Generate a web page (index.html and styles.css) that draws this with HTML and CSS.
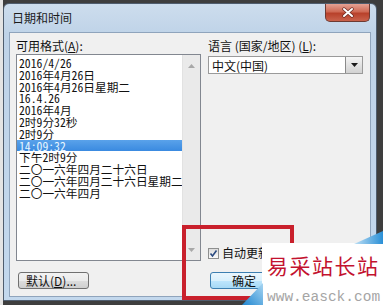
FILE: index.html
```html
<!DOCTYPE html>
<html lang="zh-CN">
<head>
    <meta charset="UTF-8">
    <meta name="viewport" content="width=device-width, initial-scale=1.0">
    <title>日期和时间</title>
    <link rel="stylesheet" href="styles.css">
</head>
<body>

<div class="desk">
    <div class="dialog">
        <div class="titlebar">
            <span class="title">日期和时间</span>
            <span class="close">
                <svg width="14" height="11" viewBox="0 0 14 11">
                    <path d="M3 2 L11 9 M11 2 L3 9" stroke="#6b2a22" stroke-width="3.4" stroke-linecap="round"/>
                    <path d="M3 2 L11 9 M11 2 L3 9" stroke="#ffffff" stroke-width="2" stroke-linecap="round"/>
                </svg>
            </span>
        </div>

        <div class="client">
            <div class="col col-left">
                <div class="label">可用格式(<u>A</u>):</div>
                <div class="listbox">
                    <ul class="items">
                        <li>2016/4/26</li>
                        <li>2016年4月26日</li>
                        <li>2016年4月26日星期二</li>
                        <li>16.4.26</li>
                        <li>2016年4月</li>
                        <li>2时9分32秒</li>
                        <li>2时9分</li>
                        <li class="selected">14:09:32</li>
                        <li>下午2时9分</li>
                        <li>二〇一六年四月二十六日</li>
                        <li>二〇一六年四月二十六日星期二</li>
                        <li>二〇一六年四月</li>
                    </ul>
                    <div class="scrollbar">
                        <svg class="arrow" width="7" height="4" viewBox="0 0 7 4"><path d="M0 4 L3.5 0 L7 4 Z" fill="#a8a8a8"/></svg>
                        <svg class="arrow" width="7" height="4" viewBox="0 0 7 4"><path d="M0 0 L3.5 4 L7 0 Z" fill="#a8a8a8"/></svg>
                    </div>
                </div>
                <button class="btn">默认(<u>D</u>)...</button>
            </div>

            <div class="col col-right">
                <div class="label">语言 (国家/地区) (<u>L</u>):</div>
                <div class="combo">
                    <span class="combo-text">中文(中国)</span>
                    <span class="drop">
                        <svg width="7" height="4" viewBox="0 0 7 4"><path d="M0 0 L7 0 L3.5 4 Z" fill="#1a1a1a"/></svg>
                    </span>
                </div>
                <div class="check">
                    <span class="box">
                        <svg width="9" height="9" viewBox="0 0 9 9"><path d="M1.5 4.5 L3.5 7 L7.5 1.5" stroke="#2a4a80" stroke-width="1.6" fill="none"/></svg>
                    </span>
                    <span>自动更新</span>
                </div>
                <button class="btn btn-default">确定</button>
            </div>
        </div>
    </div>

    <div class="mark-box"></div>

    <div class="watermark">
        <svg class="wm-bg" width="141" height="74" viewBox="0 0 141 74">
            <defs>
                <linearGradient id="blueA" x1="0" y1="0" x2="1" y2="0">
                    <stop offset="0" stop-color="#bfe0f5"/>
                    <stop offset="1" stop-color="#2a8fd6"/>
                </linearGradient>
                <linearGradient id="blueB" x1="0" y1="1" x2="1" y2="0">
                    <stop offset="0" stop-color="#1f86d0"/>
                    <stop offset="1" stop-color="#a9d6f2"/>
                </linearGradient>
            </defs>
            <rect x="20" y="12" width="121" height="62" fill="#ffffff"/>
            <path d="M112 13 L141 0 L141 13 Z" fill="url(#blueA)"/>
            <path d="M0 74 L21 52 L21 74 Z" fill="url(#blueB)"/>
        </svg>
        <div class="wm-title">易采站长站</div>
        <div class="wm-url">www.easck.com</div>
    </div>
</div>

</body>
</html>
```

FILE: styles.css
```css
body {
    margin: 0;
    background-color: #3e3e3e;
    font-family: "Noto Sans CJK SC", "Noto Sans", sans-serif;
    font-size: 12px;
    color: #111;
}
.desk {
    position: relative;
    width: 383px;
    height: 305px;
    overflow: hidden;
    padding: 3px 0 0 3px;
    box-sizing: border-box;
    background: linear-gradient(to right, #e4e4e4 3px, #3e3e3e 3px);
}
.dialog {
    width: 374px;
    height: 298px;
    border: 1px solid #4f5d6e;
    border-radius: 6px 6px 0 0;
    background: linear-gradient(#cddded, #bfd3e8 30px, #c3d8ed);
    box-sizing: border-box;
}
.titlebar {
    height: 28px;
    display: flex;
    align-items: flex-start;
    justify-content: space-between;
    padding: 0 6px 0 8px;
}
.title {
    margin-top: 7px;
    font-size: 12px;
    line-height: 14px;
    color: #1b1b1b;
}
.close {
    width: 45px;
    height: 18px;
    border: 1px solid #6d3a33;
    border-top: none;
    border-radius: 0 0 5px 5px;
    background: linear-gradient(#e4a294, #cf6a55 45%, #b8412b 55%, #c9624c);
    box-sizing: border-box;
    display: flex;
    align-items: center;
    justify-content: center;
}
.client {
    margin-left: 5px;
    width: 362px;
    height: 265px;
    border: 1px solid #8fa4bc;
    background-color: #f0f0f0;
    box-sizing: border-box;
    display: flex;
    gap: 7px;
    padding: 6px 7px 7px 6px;
}
.col {
    display: flex;
    flex-direction: column;
}
.col-left {
    width: 185px;
}
.col-right {
    width: 155px;
}
.label {
    height: 13px;
    line-height: 13px;
    white-space: nowrap;
}
.label u, .btn u {
    text-decoration: underline;
}
.listbox {
    margin-top: 2px;
    height: 207px;
    border: 1px solid #828790;
    background-color: #fff;
    box-sizing: border-box;
    display: flex;
}
.items {
    list-style: none;
    margin: 0;
    padding: 2px 0 0 0;
    flex: 1;
    overflow: hidden;
}
.items li {
    height: 11.8px;
    line-height: 11.8px;
    padding-left: 2px;
    white-space: nowrap;
    font-family: "Noto Sans Mono CJK SC", "Noto Sans CJK SC", monospace;
    font-size: 11.7px;
}
.items li.selected {
    background: linear-gradient(#5aa2ea, #3a8ae0);
    color: #e6f6ff;
}
.scrollbar {
    width: 17px;
    background-color: #eaeaea;
    border-left: 1px solid #e2e2e2;
    display: flex;
    flex-direction: column;
    justify-content: space-between;
    align-items: center;
    padding: 9px 0 8px;
}
.btn {
    height: 17px;
    width: 71px;
    padding: 0 0 0 7px;
    margin-top: 11px;
    margin-left: 2px;
    border: 1px solid #707070;
    border-radius: 3px;
    background: linear-gradient(#f2f2f2, #ebebeb 50%, #dddddd 51%, #cfcfcf);
    font-family: "Noto Sans CJK SC", sans-serif;
    font-size: 12px;
    line-height: 14px;
    color: #111;
    text-align: left;
}
.combo {
    margin-top: 4px;
    height: 18px;
    border: 1px solid #9a9a9a;
    background-color: #fff;
    box-sizing: border-box;
    display: flex;
    align-items: center;
    justify-content: space-between;
    padding-left: 3px;
}
.drop {
    width: 16px;
    height: 16px;
    border-left: 1px solid #8a8a8a;
    background: linear-gradient(#f4f4f4, #e2e2e2 50%, #d2d2d2);
    display: flex;
    align-items: center;
    justify-content: center;
}
.check {
    margin-top: auto;
    display: flex;
    align-items: center;
    gap: 3px;
    white-space: nowrap;
    line-height: 12px;
}
.check .box {
    width: 11px;
    height: 11px;
    border: 1px solid #8e8f8f;
    background: linear-gradient(#dcdcdc, #fafafa);
    box-sizing: border-box;
    display: flex;
    align-items: center;
    justify-content: center;
}
.btn-default {
    margin-top: 13px;
    border-color: #3c7fb1;
    background: linear-gradient(#eaf6fd, #d9f0fc 50%, #bee6fd 51%, #a7d9f5);
    padding-left: 21px;
}
.mark-box {
    position: absolute;
    left: 182px;
    top: 225px;
    width: 112px;
    height: 75px;
    border: 4px solid #c9202c;
    box-sizing: border-box;
}
.watermark {
    position: absolute;
    left: 242px;
    top: 231px;
    width: 141px;
    height: 74px;
}
.wm-bg {
    position: absolute;
    left: 0;
    top: 0;
}
.wm-title {
    position: absolute;
    left: 25px;
    top: 22px;
    font-size: 21px;
    line-height: 24px;
    letter-spacing: 1.5px;
    color: #c3122f;
    white-space: nowrap;
}
.wm-url {
    position: absolute;
    left: 25px;
    top: 58px;
    font-family: "Liberation Mono", monospace;
    font-size: 14.5px;
    line-height: 16px;
    color: #a5a5a5;
    white-space: nowrap;
}
```
